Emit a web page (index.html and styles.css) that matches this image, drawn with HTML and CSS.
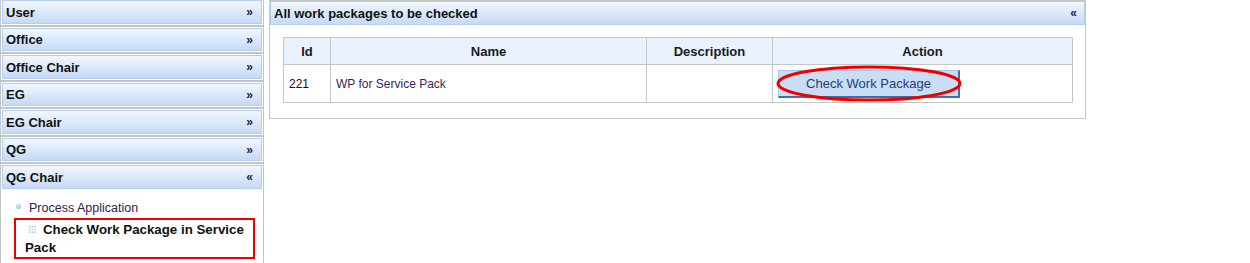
FILE: index.html
```html
<!DOCTYPE html>
<html lang="en">
<head>
  <meta charset="UTF-8">
  <title>Work packages</title>
  <link rel="stylesheet" href="styles.css">
</head>
<body>
  <div class="layout">
    <aside class="sidebar">
      <div class="acc-item"><div class="acc-head"><span>User</span><span class="arrow">&raquo;</span></div></div>
      <div class="acc-item"><div class="acc-head"><span>Office</span><span class="arrow">&raquo;</span></div></div>
      <div class="acc-item"><div class="acc-head"><span>Office Chair</span><span class="arrow">&raquo;</span></div></div>
      <div class="acc-item"><div class="acc-head"><span>EG</span><span class="arrow">&raquo;</span></div></div>
      <div class="acc-item"><div class="acc-head"><span>EG Chair</span><span class="arrow">&raquo;</span></div></div>
      <div class="acc-item"><div class="acc-head"><span>QG</span><span class="arrow">&raquo;</span></div></div>
      <div class="acc-item open">
        <div class="acc-head"><span>QG Chair</span><span class="arrow">&laquo;</span></div>
        <ul class="acc-menu">
          <li class="menu-link"><span class="bullet"></span>Process Application</li>
          <li class="menu-current">
            <svg class="grid-icon" width="7" height="7" viewBox="0 0 7 7">
              <rect x="0" y="0" width="1.6" height="1.6"/><rect x="2.7" y="0" width="1.6" height="1.6"/><rect x="5.4" y="0" width="1.6" height="1.6"/>
              <rect x="0" y="2.7" width="1.6" height="1.6"/><rect x="2.7" y="2.7" width="1.6" height="1.6"/><rect x="5.4" y="2.7" width="1.6" height="1.6"/>
              <rect x="0" y="5.4" width="1.6" height="1.6"/><rect x="2.7" y="5.4" width="1.6" height="1.6"/><rect x="5.4" y="5.4" width="1.6" height="1.6"/>
            </svg>Check Work Package in Service Pack
          </li>
        </ul>
      </div>
    </aside>

    <main class="panel">
      <div class="panel-head"><span>All work packages to be checked</span><span class="arrow">&laquo;</span></div>
      <div class="panel-body">
        <table class="grid">
          <thead>
            <tr>
              <th class="col-id">Id</th>
              <th class="col-name">Name</th>
              <th class="col-desc">Description</th>
              <th class="col-action">Action</th>
            </tr>
          </thead>
          <tbody>
            <tr>
              <td class="cell-id">221</td>
              <td class="cell-name">WP for Service Pack</td>
              <td></td>
              <td>
                <span class="btn-wrap">
                  <button class="btn">Check Work Package</button>
                  <svg class="mark" width="188" height="38" viewBox="0 0 188 38">
                    <ellipse cx="94" cy="18.5" rx="91" ry="16.5"/>
                  </svg>
                </span>
              </td>
            </tr>
          </tbody>
        </table>
      </div>
    </main>
  </div>
</body>
</html>
```

FILE: styles.css
```css
body {
  margin: 0;
  font-family: "Liberation Sans", Arial, sans-serif;
  background-color: #fff;
  color: #111;
  overflow: hidden;
}
.layout {
  display: flex;
  align-items: flex-start;
  gap: 5px;
}
.sidebar {
  width: 264px;
  flex-shrink: 0;
  margin-top: -2px;
}
.acc-item {
  border: 1px solid #c4c4c4;
  padding: 1px;
}
.acc-head {
  height: 21.5px;
  border: 1px solid #b5cdef;
  background: linear-gradient(#f1f7ff, #c6daf5);
  display: flex;
  justify-content: space-between;
  align-items: center;
  padding: 1px 8px 0 3px;
  box-sizing: content-box;
  font-size: 13px;
  font-weight: bold;
  color: #111;
}
.acc-head {
  height: 20.5px;
}
.arrow {
  font-size: 12px;
  font-weight: bold;
  color: #1a1a55;
}
.acc-item.open {
  padding-bottom: 20px;
}
.acc-menu {
  list-style: none;
  margin: 0;
  padding: 11px 7px 0 12px;
}
.menu-link {
  line-height: 17px;
  font-size: 12.5px;
  color: #33194f;
  display: flex;
  align-items: center;
}
.bullet {
  width: 5px;
  height: 5px;
  border-radius: 50%;
  background: radial-gradient(circle at 40% 40%, #d6e6fb, #8fb5e8);
  margin: -3px 8px 0 2px;
}
.menu-current {
  margin-top: 1px;
  border: 2px solid #ee0000;
  padding: 1px 6px 0 9px;
  font-size: 13.3px;
  font-weight: bold;
  line-height: 18px;
  color: #111;
}
.grid-icon {
  fill: #bccbe0;
  margin: 0 7px 0 4px;
  vertical-align: 1px;
}
.panel {
  width: 815px;
  border: 1px solid #c6c6c6;
}
.panel-head {
  height: 22px;
  border: 1px solid #b5cdef;
  background: linear-gradient(#f1f7ff, #c6daf5);
  display: flex;
  justify-content: space-between;
  align-items: center;
  padding: 0 7px 0 3px;
  font-size: 13px;
  font-weight: bold;
  color: #111;
}
.panel-body {
  padding: 12px 11px 15px 13px;
}
.grid {
  width: 790px;
  border-collapse: collapse;
  table-layout: fixed;
}
.grid th,
.grid td {
  border: 1px solid #c6c6c6;
}
.grid th {
  height: 26px;
  background-color: #e9f1fc;
  font-size: 13px;
  font-weight: bold;
  color: #1a1a1a;
  text-align: center;
  padding: 0;
}
.col-id { width: 46px; }
.col-name { width: 315px; }
.col-desc { width: 125px; }
.grid td {
  height: 37px;
  font-size: 12px;
  padding: 0 5px;
  vertical-align: middle;
}
.cell-id { color: #1c0a1c; }
.cell-name { color: #3c1e5c; }
.btn-wrap {
  position: relative;
  display: inline-block;
  vertical-align: middle;
}
.btn {
  display: block;
  width: 182px;
  height: 28px;
  margin: 0;
  padding: 0;
  font-family: "Liberation Sans", Arial, sans-serif;
  font-size: 13px;
  color: #283c78;
  background-color: #c9def4;
  border-style: solid;
  border-width: 1px 2px 2px 1px;
  border-color: #a9c5e9 #3f6ea8 #3f6ea8 #a9c5e9;
}
.mark {
  position: absolute;
  left: -3px;
  top: -5px;
  fill: none;
  stroke: #ee0000;
  stroke-width: 3;
  pointer-events: none;
}
```
